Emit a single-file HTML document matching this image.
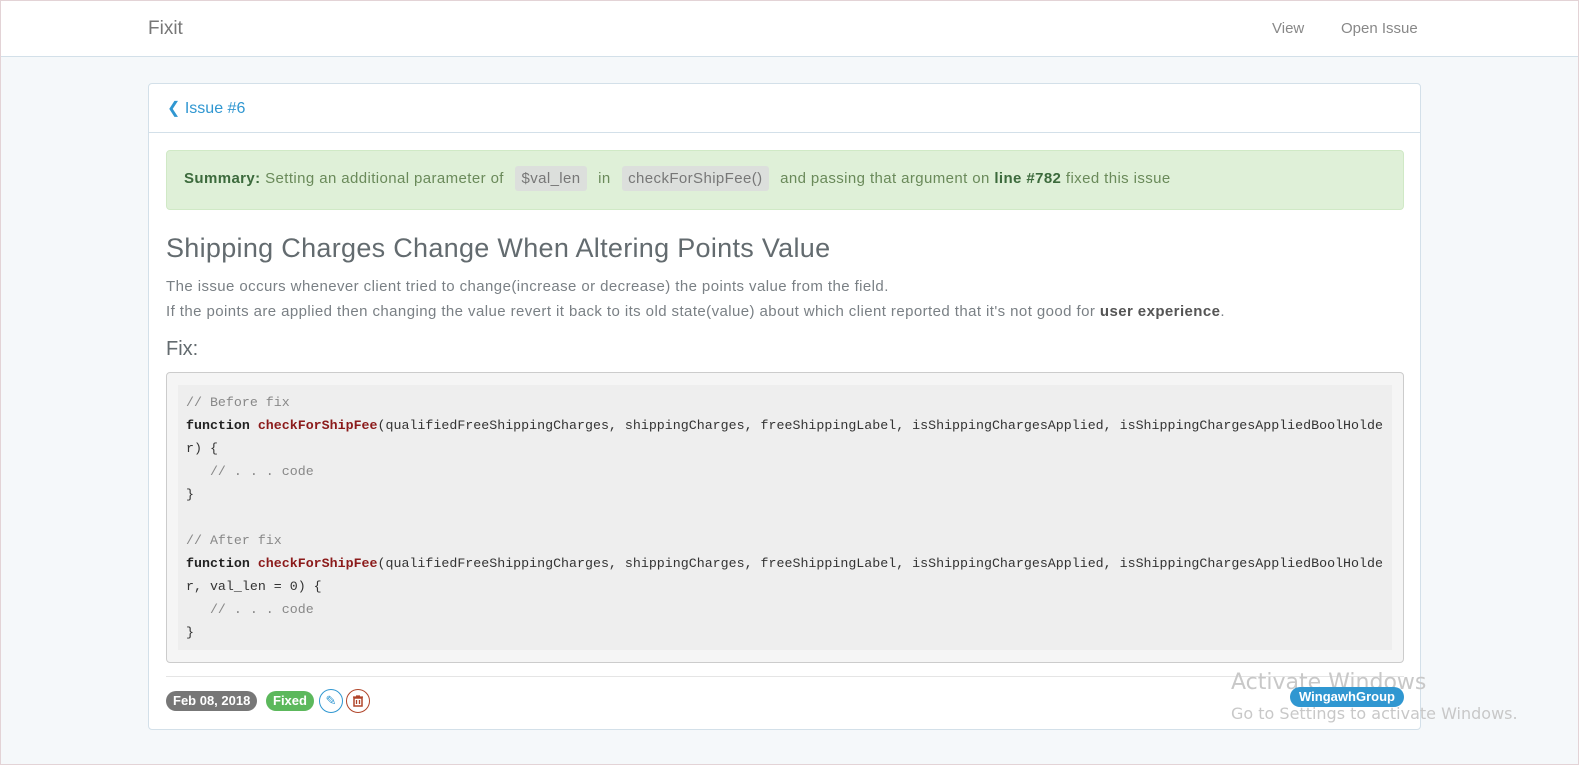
<!DOCTYPE html>
<html><head><meta charset="utf-8"><style>
*{box-sizing:border-box;margin:0;padding:0}
html,body{width:1579px;height:765px;overflow:hidden}
body{background:#f5f8fa;font-family:"Liberation Sans",sans-serif;color:#636b6f;border:1px solid #e3d3d6;position:relative}
.nav{position:absolute;left:0;top:0;width:1577px;height:56px;background:#fff;border-bottom:1px solid #d3e0e9}
.brand{position:absolute;left:147px;top:17px;font-size:19px;color:#777}
.nl{position:absolute;top:19px;font-size:15px;color:#888}
.card{position:absolute;left:147px;top:82px;width:1273px;height:647px;background:#fff;border:1px solid #d3e0e9;border-radius:4px}
.ch{height:49px;border-bottom:1px solid #d3e0e9;padding:14px 18px;color:#3097d1;font-size:16px}
.sum{position:absolute;left:17px;top:66px;width:1238px;height:60px;background:#dff0d8;border:1px solid #d0e9c6;border-radius:4px;color:#6a8a5a;font-size:15px;letter-spacing:.4px;padding:19px 17px;white-space:nowrap}
.sum b{color:#3c6a3c}
.tag{background:#dcdfdc;padding:4px 6px;border-radius:3px;margin:0 7px;color:#777}
h1{position:absolute;left:17px;top:149px;font-size:27px;font-weight:normal;color:#636b6f;letter-spacing:.3px}
.p{position:absolute;left:17px;font-size:15px;letter-spacing:.42px;white-space:nowrap;color:#7a8085}
.fix{position:absolute;left:17px;top:254px;font-size:20px;color:#636b6f}
.codebox{position:absolute;left:17px;top:288px;width:1238px;height:291px;border:1px solid #ccc;border-radius:4px;background:#f5f5f5;padding:12px 11px}
pre{background:#eee;height:265px;font-family:"Liberation Mono",monospace;font-size:13.3px;line-height:23px;padding:6px 8px;color:#333}
.c{color:#888}.k{font-weight:bold;color:#222}.f{font-weight:bold;color:#8b1a1a}
.hr{position:absolute;left:17px;top:592px;width:1238px;border-top:1px solid #e5e5e5}
.b{position:absolute;top:607px;height:20px;border-radius:10px;color:#fff;font-size:13px;font-weight:bold;padding:2px 7px}
.circ{position:absolute;top:605px;width:24px;height:24px;border-radius:50%;border:1px solid}
.aw{position:absolute;left:1230px;top:669px;font-size:22px;color:#c8c8c8;font-family:"DejaVu Sans",sans-serif}
.aw2{position:absolute;left:1230px;top:703px;font-size:16px;color:#c8c8c8;font-family:"DejaVu Sans",sans-serif}
.wg{position:absolute;left:1289px;top:686px;width:114px;height:20px;background:#3097d1;border-radius:10px;color:#fff;font-size:13px;font-weight:bold;text-align:center;line-height:20px}
</style></head><body>
<div class="nav"><div class="brand">Fixit</div><div class="nl" style="left:1271px">View</div><div class="nl" style="left:1340px">Open Issue</div></div>
<div class="card">
<div class="ch">&#10094; Issue #6</div>
<div class="sum"><b>Summary:</b> Setting an additional parameter of <span class="tag">$val_len</span> in <span class="tag">checkForShipFee()</span> and passing that argument on <b>line #782</b> fixed this issue</div>
<h1>Shipping Charges Change When Altering Points Value</h1>
<div class="p" style="top:194px">The issue occurs whenever client tried to change(increase or decrease) the points value from the field.</div>
<div class="p" style="top:219px">If the points are applied then changing the value revert it back to its old state(value) about which client reported that it's not good for <b style="color:#555">user experience</b>.</div>
<div class="fix">Fix:</div>
<div class="codebox"><pre><span class="c">// Before fix</span>
<span class="k">function</span> <span class="f">checkForShipFee</span>(qualifiedFreeShippingCharges, shippingCharges, freeShippingLabel, isShippingChargesApplied, isShippingChargesAppliedBoolHolde
r) {
   <span class="c">// . . . code</span>
}

<span class="c">// After fix</span>
<span class="k">function</span> <span class="f">checkForShipFee</span>(qualifiedFreeShippingCharges, shippingCharges, freeShippingLabel, isShippingChargesApplied, isShippingChargesAppliedBoolHolde
r, val_len = 0) {
   <span class="c">// . . . code</span>
}</pre></div>
<div class="hr"></div>
<div class="b" style="left:17px;background:#777">Feb 08, 2018</div>
<div class="b" style="left:117px;background:#5cb85c">Fixed</div>
<div class="circ" style="left:170px;border-color:#3097d1;color:#3097d1;font-size:13px;text-align:center;line-height:22px">&#9998;</div>
<div class="circ" style="left:197px;border-color:#b0452a"><svg width="22" height="22" viewBox="0 0 22 22"><rect x="7" y="8" width="8" height="8" fill="none" stroke="#b0452a" stroke-width="1.5"/><path d="M6 7h10M9 6h4M9.5 10v4M12.5 10v4" stroke="#b0452a" stroke-width="1.3"/></svg></div>
</div>
<div class="aw">Activate Windows</div>
<div class="aw2">Go to Settings to activate Windows.</div>
<div class="wg">WingawhGroup</div>
</body></html>
